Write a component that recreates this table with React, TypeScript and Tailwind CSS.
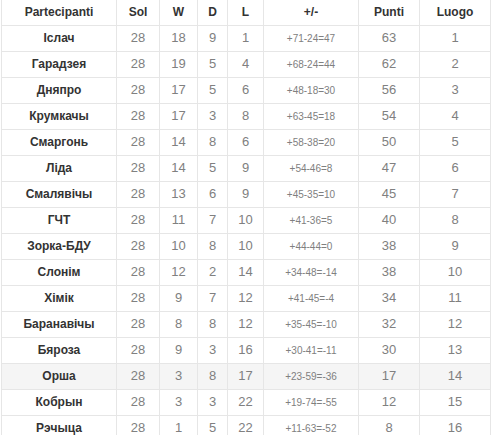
const rows: [string, number, number, number, number, string, number, number][] = [
  ['Іслач', 28, 18, 9, 1, '+71-24=47', 63, 1],
  ['Гарадзея', 28, 19, 5, 4, '+68-24=44', 62, 2],
  ['Дняпро', 28, 17, 5, 6, '+48-18=30', 56, 3],
  ['Крумкачы', 28, 17, 3, 8, '+63-45=18', 54, 4],
  ['Смаргонь', 28, 14, 8, 6, '+58-38=20', 50, 5],
  ['Ліда', 28, 14, 5, 9, '+54-46=8', 47, 6],
  ['Смалявічы', 28, 13, 6, 9, '+45-35=10', 45, 7],
  ['ГЧТ', 28, 11, 7, 10, '+41-36=5', 40, 8],
  ['Зорка-БДУ', 28, 10, 8, 10, '+44-44=0', 38, 9],
  ['Слонім', 28, 12, 2, 14, '+34-48=-14', 38, 10],
  ['Хімік', 28, 9, 7, 12, '+41-45=-4', 34, 11],
  ['Баранавічы', 28, 8, 8, 12, '+35-45=-10', 32, 12],
  ['Бяроза', 28, 9, 3, 16, '+30-41=-11', 30, 13],
  ['Орша', 28, 3, 8, 17, '+23-59=-36', 17, 14],
  ['Кобрын', 28, 3, 3, 22, '+19-74=-55', 12, 15],
  ['Рэчыца', 28, 1, 5, 22, '+11-63=-52', 8, 16],
];

const headers = ['Partecipanti', 'Sol', 'W', 'D', 'L', '+/-', 'Punti', 'Luogo'];

export default function App() {
  return (
    <div className="w-[492px] h-[435px] overflow-hidden bg-white pl-px" style={{ fontFamily: '"Liberation Sans", Arial, sans-serif' }}>
      <table className="table-fixed border-collapse w-[489px]">
        <colgroup>
          <col className="w-[115px]" />
          <col className="w-[43px]" />
          <col className="w-[38px]" />
          <col className="w-[30px]" />
          <col className="w-[36px]" />
          <col className="w-[95px]" />
          <col className="w-[61px]" />
          <col className="w-[71px]" />
        </colgroup>
        <thead>
          <tr className="h-[25px]">
            {headers.map(h => (
              <th key={h} className="border-x border-b border-[#e6e6e6] text-center text-[12px] font-bold text-[#333] p-0">
                {h}
              </th>
            ))}
          </tr>
        </thead>
        <tbody>
          {rows.map(r => (
            <tr key={r[0]} className={`h-[26px] ${r[0] === 'Орша' ? 'bg-[#f5f5f5]' : ''}`}>
              <td className="border border-[#e6e6e6] text-center text-[12px] font-bold text-[#333] p-0">{r[0]}</td>
              <td className="border border-[#e6e6e6] text-center text-[13px] text-[#808080] p-0">{r[1]}</td>
              <td className="border border-[#e6e6e6] text-center text-[13px] text-[#808080] p-0">{r[2]}</td>
              <td className="border border-[#e6e6e6] text-center text-[13px] text-[#808080] p-0">{r[3]}</td>
              <td className="border border-[#e6e6e6] text-center text-[13px] text-[#808080] p-0">{r[4]}</td>
              <td className="border border-[#e6e6e6] text-center text-[10px] text-[#808080] p-0">{r[5]}</td>
              <td className="border border-[#e6e6e6] text-center text-[13px] text-[#808080] p-0">{r[6]}</td>
              <td className="border border-[#e6e6e6] text-center text-[13px] text-[#808080] p-0">{r[7]}</td>
            </tr>
          ))}
        </tbody>
      </table>
    </div>
  );
}
